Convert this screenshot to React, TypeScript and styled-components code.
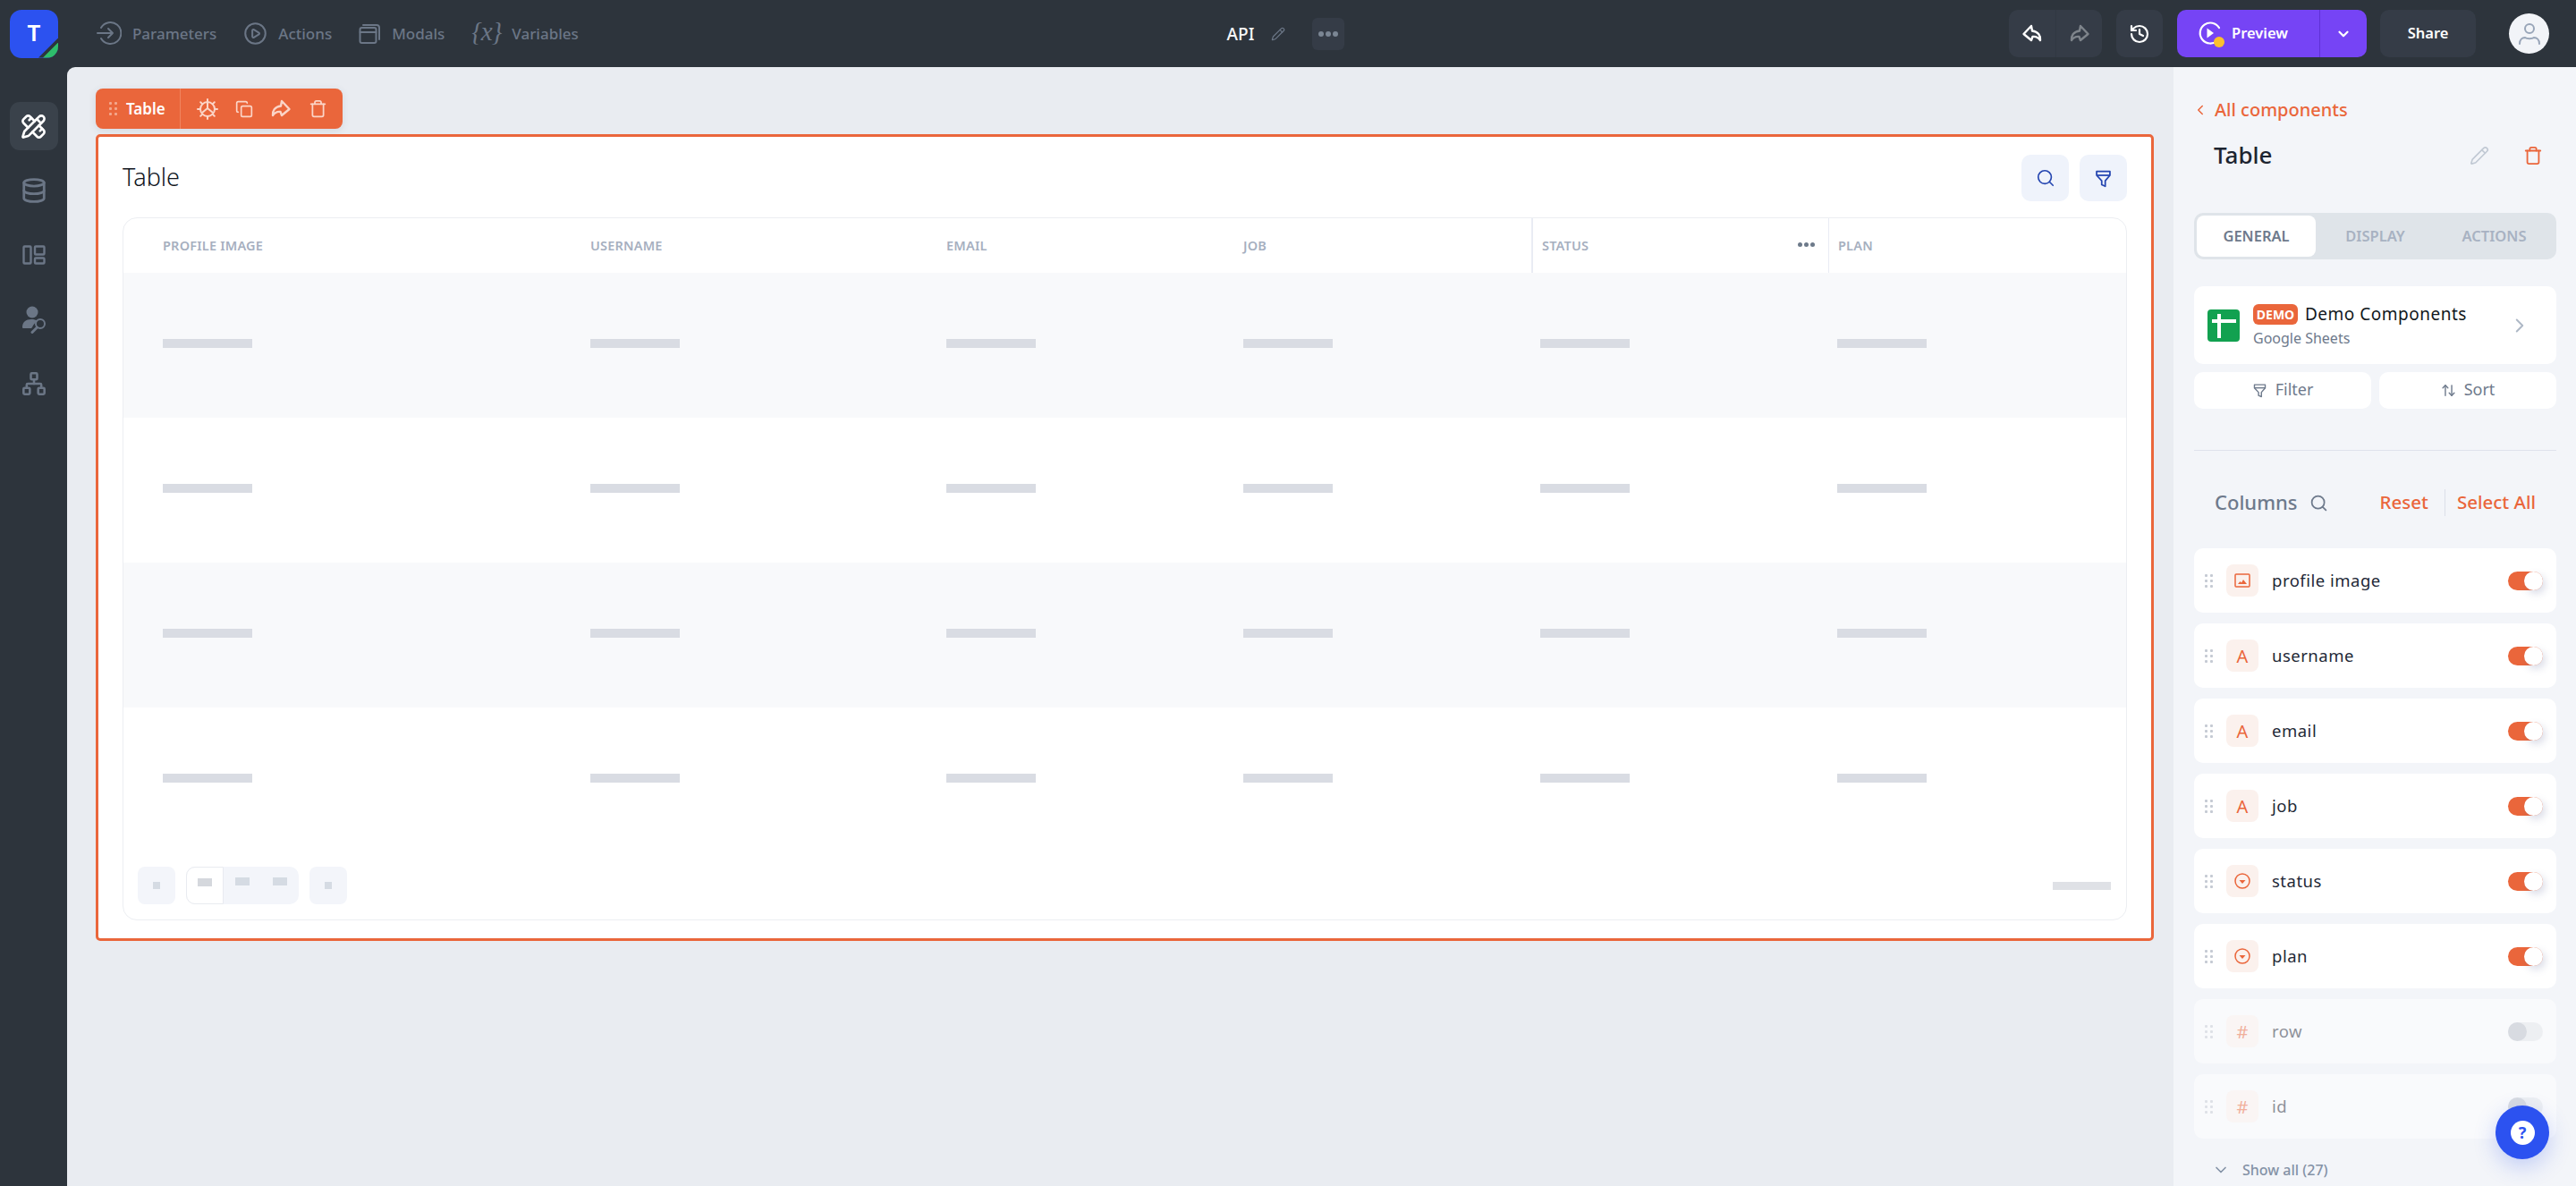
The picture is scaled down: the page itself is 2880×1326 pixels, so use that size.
import styled, { createGlobalStyle } from "styled-components"
import {
  ChevronDown,
  ChevronLeft,
  ChevronRight,
  CirclePlay,
  Copy,
  Database,
  ArrowUpDown,
  History,
  Network,
  Pencil,
  PencilRuler,
  Search,
  Trash,
} from "lucide-react"

const GlobalStyle = createGlobalStyle`
  html, body {
    margin: 0;
    padding: 0;
    height: 100%;
    font-family: "Noto Sans", "Open Sans", sans-serif;
    background: #2d343c;
  }
  * { box-sizing: border-box; }
`

const orange = "#ea663b"

const Page = styled.div`
  position: relative;
  width: 2880px;
  height: 1326px;
  display: flex;
  flex-direction: column;
  overflow: hidden;
`

/* top bar */
const TopBar = styled.header`
  height: 75px;
  flex: none;
  display: grid;
  grid-template-columns: 1fr auto 1fr;
  align-items: center;
  background: #2d343c;
  padding: 0 30px 0 11px;
`

const TopLeft = styled.div`
  display: flex;
  align-items: center;
`

const Logo = styled.div`
  position: relative;
  width: 54px;
  height: 54px;
  border-radius: 13px;
  overflow: hidden;
  background: #2c52f0;
  color: #fff;
  font-size: 26px;
  font-weight: 600;
  display: flex;
  align-items: center;
  justify-content: center;
  padding-bottom: 3px;
  &::before,
  &::after {
    content: "";
    position: absolute;
    right: 0;
    bottom: 0;
    clip-path: polygon(100% 0, 100% 100%, 0 100%);
  }
  &::before {
    width: 22px;
    height: 22px;
    background: #2d343c;
  }
  &::after {
    width: 17px;
    height: 17px;
    background: #2ebd6b;
  }
`

const TopNav = styled.nav`
  display: flex;
  align-items: center;
  gap: 30px;
  margin-left: 43px;
`

const TopNavItem = styled.div`
  display: flex;
  align-items: center;
  gap: 12px;
  color: #6b7686;
  font-size: 17px;
  font-weight: 500;
  padding-bottom: 1px;
  svg { flex: none; }
`

const VarGlyph = styled.span`
  font-family: "Liberation Serif", serif;
  font-style: italic;
  font-size: 29px;
  line-height: 1;
  letter-spacing: -1px;
  color: #6b7686;
  margin-top: -4px;
`

const TopCenter = styled.div`
  display: flex;
  align-items: center;
  margin-left: 14px;
`

const ApiTitle = styled.span`
  color: #f5f6f8;
  font-size: 19px;
  font-weight: 500;
  margin-right: 19px;
`

const MoreButton = styled.button`
  width: 36px;
  height: 36px;
  margin-left: 30px;
  border: 0;
  padding: 0;
  border-radius: 6px;
  background: #353c47;
  color: #7b8694;
  display: flex;
  align-items: center;
  justify-content: center;
`

const DotRow = styled.span<{ $size: number; $color: string }>`
  display: inline-flex;
  gap: ${({ $size }) => Math.round($size / 3)}px;
  i {
    width: ${({ $size }) => $size}px;
    height: ${({ $size }) => $size}px;
    border-radius: 50%;
    background: ${({ $color }) => $color};
  }
`

const TopRight = styled.div`
  display: flex;
  align-items: center;
  justify-content: flex-end;
`

const DarkGroup = styled.div`
  display: flex;
  height: 53px;
  border-radius: 10px;
  overflow: hidden;
  background: #353c47;
  margin-right: 16px;
`

const DarkCell = styled.div<{ $muted?: boolean }>`
  width: 52px;
  display: flex;
  align-items: center;
  justify-content: center;
  color: ${({ $muted }) => ($muted ? "#7e848b" : "#fff")};
  & + & { border-left: 1px solid #313842; }
`

const PreviewButton = styled.div`
  display: flex;
  height: 53px;
  width: 212px;
  border-radius: 10px;
  background: #7644f5;
  color: #fff;
  margin-right: 15px;
`

const PreviewMain = styled.div`
  flex: 1;
  display: flex;
  align-items: center;
  gap: 7px;
  padding-left: 23px;
  font-size: 16.5px;
  font-weight: 600;
  span { margin-bottom: 3px; }
`

const PreviewCaret = styled.div`
  width: 53px;
  display: flex;
  align-items: center;
  justify-content: center;
  border-left: 1px solid #5f31d6;
`

const ShareButton = styled.div`
  width: 107px;
  height: 53px;
  border-radius: 10px;
  background: #353c47;
  color: #fff;
  font-size: 16.5px;
  font-weight: 600;
  display: flex;
  align-items: center;
  justify-content: center;
  padding-bottom: 3px;
`

const Avatar = styled.div`
  width: 45px;
  height: 45px;
  margin-left: 37px;
  border-radius: 50%;
  background: #f2f4f8;
  display: flex;
  align-items: center;
  justify-content: center;
`

/* body */
const Body = styled.div`
  flex: 1;
  min-height: 0;
  display: grid;
  grid-template-columns: 75px 1fr 450px;
`

const Sidebar = styled.aside`
  background: #2d343c;
  display: flex;
  flex-direction: column;
  align-items: center;
  padding-top: 39px;
  gap: 18px;
`

const SideItem = styled.div<{ $active?: boolean }>`
  width: 54px;
  height: 54px;
  border-radius: 11px;
  display: flex;
  align-items: center;
  justify-content: center;
  background: ${({ $active }) => ($active ? "#3a424b" : "transparent")};
  color: ${({ $active }) => ($active ? "#fff" : "#6b7686")};
`

const Canvas = styled.main`
  background: #e9ecf1;
  border-top-left-radius: 9px;
  padding: 24px 22px 0 32px;
  min-width: 0;
`

const CompToolbar = styled.div`
  width: 276px;
  height: 45px;
  border-radius: 8px;
  background: ${orange};
  display: flex;
  align-items: stretch;
  margin-bottom: 6px;
  box-shadow: 0 2px 8px rgba(60, 70, 90, 0.12);
`

const CompName = styled.div`
  width: 95px;
  display: flex;
  align-items: center;
  gap: 10px;
  padding-left: 15px;
  color: #fff;
  font-size: 17px;
  font-weight: 600;
  border-right: 1px solid #f0855f;
`

const CompIcons = styled.div`
  flex: 1;
  display: flex;
  align-items: center;
  gap: 19px;
  padding-left: 18px;
  color: #fbd5c8;
`

const DragDots = styled.span<{ $color: string; $dot: number; $gap: number }>`
  display: inline-grid;
  flex: none;
  grid-template-columns: repeat(2, ${({ $dot }) => $dot}px);
  grid-auto-rows: ${({ $dot }) => $dot}px;
  gap: ${({ $gap }) => $gap}px;
  i { background: ${({ $color }) => $color}; border-radius: 1px; }
`

const Widget = styled.section`
  height: 902px;
  border: 3px solid ${orange};
  border-radius: 5px;
  background: #fff;
  padding: 20px 27px 20px 27px;
  display: flex;
  flex-direction: column;
`

const WidgetHead = styled.div`
  display: flex;
  align-items: center;
  justify-content: space-between;
  height: 52px;
  margin-bottom: 18px;
`

const WidgetTitle = styled.h1`
  margin: 0 0 3px;
  font-size: 27px;
  font-weight: 300;
  color: #11161e;
`

const WidgetActions = styled.div`
  display: flex;
  gap: 12px;
`

const SoftButton = styled.div`
  width: 53px;
  height: 52px;
  border-radius: 10px;
  background: #eff3fb;
  color: #2445b0;
  display: flex;
  align-items: center;
  justify-content: center;
`

const TableFrame = styled.div`
  flex: 1;
  border: 1px solid #eceef2;
  border-radius: 16px;
  overflow: hidden;
  display: flex;
  flex-direction: column;
`

const columns = "512px 398px 332px 332px 332px 1fr"

const HeadRow = styled.div`
  height: 61px;
  flex: none;
  display: grid;
  grid-template-columns: ${columns};
`

const HeadCell = styled.div<{ $first?: boolean; $divider?: number }>`
  display: flex;
  align-items: center;
  justify-content: space-between;
  padding: 0 15px 2px ${({ $first }) => ($first ? 44 : 10)}px;
  font-size: 14.5px;
  font-weight: 600;
  letter-spacing: 0.2px;
  color: #a6afbf;
  border-left: ${({ $divider }) => $divider ?? 0}px solid #e9ecf4;
`

const BodyRow = styled.div<{ $striped: boolean }>`
  height: 162px;
  flex: none;
  display: grid;
  grid-template-columns: ${columns};
  align-items: center;
  padding-bottom: 5px;
  background: ${({ $striped }) => ($striped ? "#f8f9fb" : "#fff")};
`

const SkeletonCell = styled.div<{ $first?: boolean }>`
  padding-left: ${({ $first }) => ($first ? 44 : 10)}px;
`

const SkeletonBar = styled.div`
  width: 100px;
  height: 10px;
  background: #d9dce3;
`

const TableFooter = styled.div`
  flex: 1;
  display: flex;
  align-items: center;
  padding: 0 17px 0 16px;
  padding-bottom: 1px;
`

const PageBox = styled.div`
  width: 42px;
  height: 42px;
  border-radius: 8px;
  background: #f3f5fa;
  display: flex;
  align-items: center;
  justify-content: center;
  i {
    width: 8px;
    height: 8px;
    background: #d5dbe3;
  }
`

const PageGroup = styled.div`
  width: 126px;
  height: 42px;
  margin: 0 12px;
  border-radius: 10px;
  background: #f3f5fa;
  display: flex;
`

const PageCell = styled.div<{ $active?: boolean }>`
  width: 42px;
  display: flex;
  align-items: flex-start;
  justify-content: center;
  padding-top: 12px;
  background: ${({ $active }) => ($active ? "#fff" : "transparent")};
  border: ${({ $active }) => ($active ? "1px solid #e9ebf0" : "0")};
  border-radius: ${({ $active }) => ($active ? "10px 0 0 10px" : "0")};
  i {
    width: 16px;
    height: 9px;
    background: ${({ $active }) => ($active ? "#d5d8dd" : "#d5dbe3")};
  }
`

const FooterBar = styled.div`
  width: 65px;
  height: 9px;
  margin-left: auto;
  background: #dfe1e6;
`

/* right panel */
const Panel = styled.aside`
  background: #f3f5f9;
  padding: 0 22px 0 23px;
  overflow: hidden;
`

const BackLink = styled.div`
  display: flex;
  align-items: center;
  height: 24px;
  margin-top: 36px;
  color: ${orange};
  font-size: 20px;
  font-weight: 500;
  gap: 7px;
  margin-left: -2px;
  span { margin-bottom: 2px; }
`

const PanelHead = styled.div`
  display: flex;
  align-items: center;
  height: 40px;
  margin-top: 19px;
  padding-left: 22px;
`

const PanelTitle = styled.h2`
  flex: 1;
  margin: 0 0 3px;
  font-size: 26px;
  font-weight: 500;
  color: #1c2430;
`

const PanelHeadIcons = styled.div`
  display: flex;
  align-items: center;
  gap: 38px;
  padding-right: 15px;
`

const Tabs = styled.div`
  height: 52px;
  margin-top: 44px;
  padding: 3px;
  border-radius: 10px;
  background: #dfe4e9;
  display: grid;
  grid-template-columns: repeat(3, 1fr);
`

const Tab = styled.div<{ $active?: boolean }>`
  border-radius: 8px;
  display: flex;
  align-items: center;
  justify-content: center;
  padding-bottom: 2px;
  font-size: 16.5px;
  font-weight: 600;
  background: ${({ $active }) => ($active ? "#fff" : "transparent")};
  color: ${({ $active }) => ($active ? "#6e7a8c" : "#a8b2c2")};
`

const SourceCard = styled.div`
  height: 87px;
  margin-top: 30px;
  border-radius: 10px;
  background: #fff;
  display: flex;
  align-items: center;
  padding: 0 28px 0 15px;
`

const SheetIcon = styled.div`
  flex: none;
  width: 36px;
  height: 36px;
  margin-right: 15px;
  border-radius: 4px;
  background: #12a150;
  display: flex;
  align-items: center;
  justify-content: center;
`

const SourceText = styled.div`
  flex: 1;
`

const SourceTop = styled.div`
  display: flex;
  align-items: center;
  gap: 8px;
  font-size: 19px;
  letter-spacing: 0.5px;
  color: #111820;
`

const DemoBadge = styled.span`
  width: 50px;
  height: 23px;
  border-radius: 6px;
  background: ${orange};
  color: #fff;
  font-size: 14px;
  font-weight: 700;
  letter-spacing: 0;
  display: flex;
  align-items: center;
  justify-content: center;
`

const SourceSub = styled.div`
  margin-top: 3px;
  font-size: 16px;
  color: #6e7a8c;
`

const QueryRow = styled.div`
  display: grid;
  grid-template-columns: 1fr 1fr;
  gap: 9px;
  margin-top: 9px;
`

const QueryButton = styled.div`
  height: 41px;
  border-radius: 10px;
  background: #fff;
  color: #6e7a8c;
  font-size: 18px;
  display: flex;
  align-items: center;
  justify-content: center;
  gap: 9px;
  span { margin-bottom: 3px; }
`

const Rule = styled.hr`
  margin: 46px 0 0;
  height: 1px;
  border: 0;
  background: #dfe2ec;
`

const ColumnsHead = styled.div`
  display: flex;
  align-items: center;
  height: 30px;
  margin-top: 43px;
  padding-left: 23px;
`

const ColumnsTitle = styled.div`
  font-size: 22px;
  font-weight: 500;
  color: #6e7a8c;
  margin: 0 14px 3px 0;
`

const ColumnsLinks = styled.div`
  display: flex;
  align-items: stretch;
  height: 30px;
  margin-left: auto;
  padding-right: 23px;
  color: ${orange};
  font-size: 20.5px;
  font-weight: 500;
  line-height: 28px;
  span + span {
    margin-left: 18px;
    padding-left: 13px;
    border-left: 1px solid #dcdfe8;
  }
`

const ColumnList = styled.div`
  margin-top: 36px;
  display: flex;
  flex-direction: column;
  gap: 12px;
`

const ColumnRow = styled.div<{ $off: boolean }>`
  height: 72px;
  flex: none;
  border-radius: 10px;
  display: flex;
  align-items: center;
  padding: 0 15px 0 12px;
  background: ${({ $off }) => ($off ? "#f9fafc" : "#fff")};
  > * { opacity: ${({ $off }) => ($off ? 0.5 : 1)}; }
`

const TypeBox = styled.div`
  flex: none;
  width: 36px;
  height: 36px;
  margin: 0 15px;
  border-radius: 8px;
  background: #fbf1ed;
  color: ${orange};
  font-size: 20px;
  display: flex;
  align-items: center;
  justify-content: center;
`

const ColumnLabel = styled.div`
  flex: 1;
  font-size: 18.5px;
  letter-spacing: 0.5px;
  color: #1f2937;
  padding-bottom: 2px;
`

const Toggle = styled.div<{ $on: boolean }>`
  width: 39px;
  height: 21px;
  border-radius: 11px;
  display: flex;
  justify-content: ${({ $on }) => ($on ? "flex-end" : "flex-start")};
  background: ${({ $on }) => ($on ? orange : "#e3e6ea")};
  i {
    width: 21px;
    height: 21px;
    border-radius: 50%;
    background: ${({ $on }) => ($on ? "#fff" : "#b9bec8")};
    box-shadow: ${({ $on }) => ($on ? "3px 4px 8px rgba(90, 100, 150, 0.22)" : "none")};
  }
`

const ShowAll = styled.div`
  display: flex;
  align-items: center;
  gap: 14px;
  height: 20px;
  margin-top: 25px;
  padding-left: 20px;
  color: #8492a6;
  font-size: 16px;
  font-weight: 500;
`

const HelpButton = styled.div`
  position: absolute;
  right: 30px;
  bottom: 30px;
  width: 60px;
  height: 60px;
  border-radius: 50%;
  background: #2c52f0;
  box-shadow: 0 8px 24px rgba(44, 82, 240, 0.25);
  display: flex;
  align-items: center;
  justify-content: center;
  span {
    width: 27px;
    height: 27px;
    border-radius: 50%;
    background: #fff;
    color: #2c52f0;
    font-size: 18px;
    font-weight: 700;
    display: flex;
    align-items: center;
    justify-content: center;
  }
`

/* drawn icons */
const ParamIcon = () => (
  <svg width="28" height="28" viewBox="0 0 28 28" fill="none" stroke="#6b7686" strokeWidth="2" strokeLinecap="round" strokeLinejoin="round">
    <path d="M5 8a12 12 0 1 1 0 12" />
    <path d="M1 14h17M13 9l5 5-5 5" />
  </svg>
)

const ModalIcon = () => (
  <svg width="25" height="25" viewBox="0 0 25 25" fill="none" stroke="#6b7686" strokeWidth="2" strokeLinejoin="round">
    <rect x="1.5" y="6" width="18" height="17" rx="2" />
    <path d="M1.5 11h18M5 3h15a3 3 0 0 1 3 3v13" strokeLinecap="round" />
  </svg>
)

const PenIcon = ({ color, size }: { color: string; size: number }) => <Pencil size={size} color={color} strokeWidth={1.8} />

const BackArrow = ({ flip, color }: { flip?: boolean; color: string }) => (
  <svg width="24" height="24" viewBox="0 0 24 24" fill="none" stroke={color} strokeWidth="2.4" strokeLinejoin="round" style={flip ? { transform: "scaleX(-1)" } : undefined}>
    <path d="M11 3 2.5 12 11 19l1.5-4c3-.5 6 .5 8.5 4 .5-5-2-9.5-9-10.5z" />
  </svg>
)

const GearIcon = () => (
  <svg width="24" height="24" viewBox="0 0 24 24" fill="none" stroke="#fbd5c8" strokeWidth="2" strokeLinejoin="round">
    <circle cx="12" cy="12" r="8" />
    <path d="M12 1v3M12 20v3M1 12h3M20 12h3M4.2 4.2l2.2 2.2M17.6 17.6l2.2 2.2M4.2 19.8l2.2-2.2M17.6 6.4l2.2-2.2" strokeLinecap="round" />
    <path d="M12 4v7M12 11l-6 5M12 11l6 5" />
  </svg>
)

const PreviewIcon = () => (
  <svg width="31" height="34" viewBox="0 0 31 34" fill="none">
    <path d="M22 24.5A11.5 11.5 0 1 1 24 10" stroke="#fff" strokeWidth="2.2" strokeLinecap="round" />
    <path d="M10.5 10.5 18 16l-7.500 5.500z" fill="#fff" />
    <circle cx="24" cy="26" r="6" fill="#fbc02d" />
  </svg>
)

const UserIcon = () => (
  <svg width="26" height="28" viewBox="0 0 26 28" fill="none" stroke="#98a5b8" strokeWidth="2" strokeLinecap="round">
    <circle cx="13" cy="8" r="5" />
    <path d="M2 25c0-5 3-7 6-7 2 1.500 8 1.500 10 0 3 0 6 2 6 7" />
  </svg>
)

const LayoutIcon = () => (
  <svg width="26" height="22" viewBox="0 0 26 22" fill="none" stroke="#6b7686" strokeWidth="2.4" strokeLinejoin="round">
    <rect x="1.500" y="1.500" width="8" height="19" rx="1" />
    <rect x="14" y="1.500" width="10.500" height="9" rx="1" />
    <rect x="14" y="14.500" width="10.500" height="6" rx="1" />
  </svg>
)

const UserKeyIcon = () => (
  <svg width="28" height="31" viewBox="0 0 28 31" fill="none">
    <circle cx="12" cy="7" r="6.500" fill="#6b7686" />
    <path d="M1 24c0-6 4-9 10-9 3 0 5 .5 7 2-3 2-5 4-6 7l-1 1H3c-1 0-2 0-2-1z" fill="#6b7686" />
    <circle cx="21" cy="20" r="5" stroke="#6b7686" strokeWidth="2" />
    <path d="M17.500 24 12 29.500" stroke="#6b7686" strokeWidth="3" strokeLinecap="round" />
  </svg>
)

const FunnelIcon = ({ color, size }: { color: string; size: number }) => (
  <svg width={size} height={size} viewBox="0 0 24 24" fill="none" stroke={color} strokeWidth="2" strokeLinejoin="round">
    <path d="M3.500 3h17v5l-6 7v7l-4.500-2v-5l-6.500-7z" />
    <path d="M3.500 8h17" />
  </svg>
)

const ImageTypeIcon = () => (
  <svg width="18" height="18" viewBox="0 0 18 18" fill="none">
    <rect x="1" y="2" width="16" height="14" rx="1" stroke={orange} strokeWidth="1.500" />
    <path d="M4 13l2.500-3 1.500 1.500L10 8l4 5z" fill={orange} />
  </svg>
)

const SelectTypeIcon = () => (
  <svg width="18" height="18" viewBox="0 0 18 18" fill="none">
    <circle cx="9" cy="9" r="8" stroke={orange} strokeWidth="1.500" />
    <path d="M5.500 8h7L9 12z" fill={orange} />
  </svg>
)

const Handle = ({ color, dot, gap, count }: { color: string; dot: number; gap: number; count: number }) => (
  <DragDots $color={color} $dot={dot} $gap={gap}>
    {Array.from({ length: count }, (_, i) => (
      <i key={i} />
    ))}
  </DragDots>
)

const Dots = ({ size, color }: { size: number; color: string }) => (
  <DotRow $size={size} $color={color}>
    <i />
    <i />
    <i />
  </DotRow>
)

const headers = ["PROFILE IMAGE", "USERNAME", "EMAIL", "JOB", "STATUS", "PLAN"]

const tableColumns = [
  { name: "profile image", type: "image" },
  { name: "username", type: "text" },
  { name: "email", type: "text" },
  { name: "job", type: "text" },
  { name: "status", type: "select" },
  { name: "plan", type: "select" },
  { name: "row", type: "number", off: true },
  { name: "id", type: "number", off: true },
]

const TypeIcon = ({ type }: { type: string }) => {
  if (type === "image") return <ImageTypeIcon />
  if (type === "select") return <SelectTypeIcon />
  return <>{type === "text" ? "A" : "#"}</>
}

export default function App() {
  return (
    <Page>
      <GlobalStyle />
      <TopBar>
        <TopLeft>
          <Logo>T</Logo>
          <TopNav>
            <TopNavItem>
              <ParamIcon />
              Parameters
            </TopNavItem>
            <TopNavItem>
              <CirclePlay size={27} strokeWidth={1.8} />
              Actions
            </TopNavItem>
            <TopNavItem>
              <ModalIcon />
              Modals
            </TopNavItem>
            <TopNavItem>
              <VarGlyph>{"{x}"}</VarGlyph>
              Variables
            </TopNavItem>
          </TopNav>
        </TopLeft>
        <TopCenter>
          <ApiTitle>API</ApiTitle>
          <PenIcon color="#6b7686" size={16} />
          <MoreButton>
            <Dots size={6} color="#7b8694" />
          </MoreButton>
        </TopCenter>
        <TopRight>
          <DarkGroup>
            <DarkCell>
              <BackArrow color="#fff" />
            </DarkCell>
            <DarkCell $muted>
              <BackArrow flip color="#7e848b" />
            </DarkCell>
          </DarkGroup>
          <DarkGroup>
            <DarkCell>
              <History size={24} strokeWidth={2.2} />
            </DarkCell>
          </DarkGroup>
          <PreviewButton>
            <PreviewMain>
              <PreviewIcon />
              <span>Preview</span>
            </PreviewMain>
            <PreviewCaret>
              <ChevronDown size={18} strokeWidth={3} />
            </PreviewCaret>
          </PreviewButton>
          <ShareButton>Share</ShareButton>
          <Avatar>
            <UserIcon />
          </Avatar>
        </TopRight>
      </TopBar>
      <Body>
        <Sidebar>
          <SideItem $active>
            <PencilRuler size={29} strokeWidth={2.2} />
          </SideItem>
          <SideItem>
            <Database size={30} strokeWidth={2.2} />
          </SideItem>
          <SideItem>
            <LayoutIcon />
          </SideItem>
          <SideItem>
            <UserKeyIcon />
          </SideItem>
          <SideItem>
            <Network size={28} strokeWidth={2.2} />
          </SideItem>
        </Sidebar>
        <Canvas>
          <CompToolbar>
            <CompName>
              <Handle color="#f3a78c" dot={3} gap={3} count={6} />
              Table
            </CompName>
            <CompIcons>
              <GearIcon />
              <Copy size={20} strokeWidth={2} />
              <BackArrow flip color="#fbd5c8" />
              <Trash size={21} strokeWidth={2} />
            </CompIcons>
          </CompToolbar>
          <Widget>
            <WidgetHead>
              <WidgetTitle>Table</WidgetTitle>
              <WidgetActions>
                <SoftButton>
                  <Search size={22} strokeWidth={1.8} />
                </SoftButton>
                <SoftButton>
                  <FunnelIcon color="#2445b0" size={21} />
                </SoftButton>
              </WidgetActions>
            </WidgetHead>
            <TableFrame>
              <HeadRow>
                {headers.map((h, i) => (
                  <HeadCell key={h} $first={i === 0} $divider={h === "STATUS" ? 2 : h === "PLAN" ? 1 : 0}>
                    {h}
                    {h === "STATUS" && <Dots size={5} color="#6d7a8a" />}
                  </HeadCell>
                ))}
              </HeadRow>
              {[0, 1, 2, 3].map((row) => (
                <BodyRow key={row} $striped={row % 2 === 0}>
                  {headers.map((h, i) => (
                    <SkeletonCell key={h} $first={i === 0}>
                      <SkeletonBar />
                    </SkeletonCell>
                  ))}
                </BodyRow>
              ))}
              <TableFooter>
                <PageBox>
                  <i />
                </PageBox>
                <PageGroup>
                  <PageCell $active>
                    <i />
                  </PageCell>
                  <PageCell>
                    <i />
                  </PageCell>
                  <PageCell>
                    <i />
                  </PageCell>
                </PageGroup>
                <PageBox>
                  <i />
                </PageBox>
                <FooterBar />
              </TableFooter>
            </TableFrame>
          </Widget>
        </Canvas>
        <Panel>
          <BackLink>
            <ChevronLeft size={18} strokeWidth={2} />
            <span>All components</span>
          </BackLink>
          <PanelHead>
            <PanelTitle>Table</PanelTitle>
            <PanelHeadIcons>
              <PenIcon color="#c1c9d4" size={22} />
              <Trash size={22} color={orange} strokeWidth={2} />
            </PanelHeadIcons>
          </PanelHead>
          <Tabs>
            <Tab $active>GENERAL</Tab>
            <Tab>DISPLAY</Tab>
            <Tab>ACTIONS</Tab>
          </Tabs>
          <SourceCard>
            <SheetIcon>
              <svg width="28" height="30" viewBox="0 0 28 30" fill="none" stroke="#fff" strokeWidth="4">
                <path d="M1 10h27M9 2v27" />
              </svg>
            </SheetIcon>
            <SourceText>
              <SourceTop>
                <DemoBadge>DEMO</DemoBadge>
                Demo Components
              </SourceTop>
              <SourceSub>Google Sheets</SourceSub>
            </SourceText>
            <ChevronRight size={26} color="#aeb8c6" strokeWidth={1.8} />
          </SourceCard>
          <QueryRow>
            <QueryButton>
              <FunnelIcon color="#6e7a8c" size={17} />
              <span>Filter</span>
            </QueryButton>
            <QueryButton>
              <ArrowUpDown size={17} strokeWidth={2} />
              <span>Sort</span>
            </QueryButton>
          </QueryRow>
          <Rule />
          <ColumnsHead>
            <ColumnsTitle>Columns</ColumnsTitle>
            <Search size={21} color="#6e7a8c" strokeWidth={2} />
            <ColumnsLinks>
              <span>Reset</span>
              <span>Select All</span>
            </ColumnsLinks>
          </ColumnsHead>
          <ColumnList>
            {tableColumns.map((c) => (
              <ColumnRow key={c.name} $off={!!c.off}>
                <Handle color="#c5cad3" dot={3} gap={3} count={6} />
                <TypeBox>
                  <TypeIcon type={c.type} />
                </TypeBox>
                <ColumnLabel>{c.name}</ColumnLabel>
                <Toggle $on={!c.off}>
                  <i />
                </Toggle>
              </ColumnRow>
            ))}
          </ColumnList>
          <ShowAll>
            <ChevronDown size={20} strokeWidth={2} />
            Show all (27)
          </ShowAll>
        </Panel>
      </Body>
      <HelpButton>
        <span>?</span>
      </HelpButton>
    </Page>
  )
}
